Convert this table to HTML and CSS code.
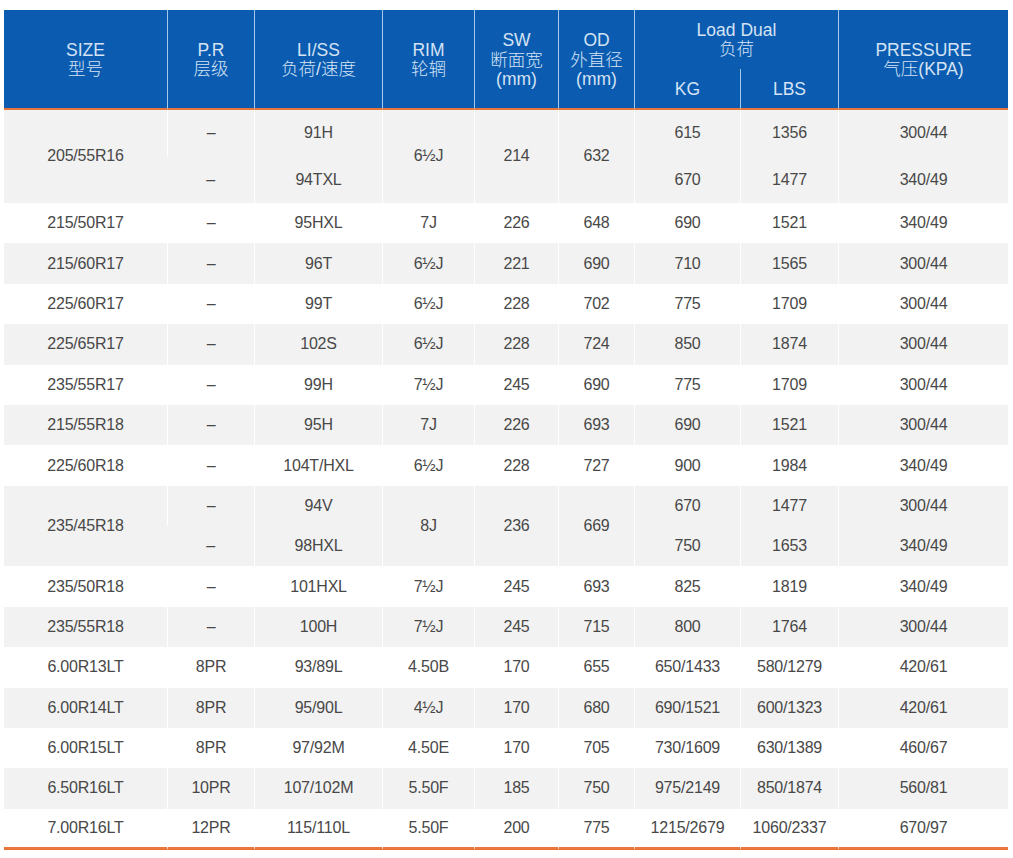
FILE: index.html
```html
<!DOCTYPE html>
<html lang="zh">
<head>
<meta charset="utf-8">
<title>Tyre specifications</title>
<link rel="stylesheet" href="styles.css">
</head>
<body>
<table class="spec">
  <colgroup>
    <col class="c-size"><col class="c-pr"><col class="c-li"><col class="c-rim"><col class="c-sw"><col class="c-od"><col class="c-kg"><col class="c-lbs"><col class="c-pre">
  </colgroup>
  <thead>
    <tr class="h1">
      <th rowspan="2" class="bot span">SIZE<br>型号</th>
      <th rowspan="2" class="bot span">P.R<br>层级</th>
      <th rowspan="2" class="bot span">LI/SS<br>负荷/速度</th>
      <th rowspan="2" class="bot span">RIM<br>轮辋</th>
      <th rowspan="2" class="bot span">SW<br>断面宽<br>(mm)</th>
      <th rowspan="2" class="bot span">OD<br>外直径<br>(mm)</th>
      <th colspan="2" class="group">Load Dual<br>负荷</th>
      <th rowspan="2" class="bot span">PRESSURE<br>气压(KPA)</th>
    </tr>
    <tr class="h2">
      <th class="bot sub">KG</th>
      <th class="bot sub">LBS</th>
    </tr>
  </thead>
  <tbody>
    <tr class="g tall">
      <td rowspan="2">205/55R16</td><td>–</td><td>91H</td><td rowspan="2">6½J</td><td rowspan="2">214</td><td rowspan="2">632</td><td>615</td><td>1356</td><td>300/44</td>
    </tr>
    <tr class="g tall">
      <td>–</td><td>94TXL</td><td>670</td><td>1477</td><td>340/49</td>
    </tr>
    <tr><td>215/50R17</td><td>–</td><td>95HXL</td><td>7J</td><td>226</td><td>648</td><td>690</td><td>1521</td><td>340/49</td></tr>
    <tr class="g"><td>215/60R17</td><td>–</td><td>96T</td><td>6½J</td><td>221</td><td>690</td><td>710</td><td>1565</td><td>300/44</td></tr>
    <tr><td>225/60R17</td><td>–</td><td>99T</td><td>6½J</td><td>228</td><td>702</td><td>775</td><td>1709</td><td>300/44</td></tr>
    <tr class="g"><td>225/65R17</td><td>–</td><td>102S</td><td>6½J</td><td>228</td><td>724</td><td>850</td><td>1874</td><td>300/44</td></tr>
    <tr><td>235/55R17</td><td>–</td><td>99H</td><td>7½J</td><td>245</td><td>690</td><td>775</td><td>1709</td><td>300/44</td></tr>
    <tr class="g"><td>215/55R18</td><td>–</td><td>95H</td><td>7J</td><td>226</td><td>693</td><td>690</td><td>1521</td><td>300/44</td></tr>
    <tr><td>225/60R18</td><td>–</td><td>104T/HXL</td><td>6½J</td><td>228</td><td>727</td><td>900</td><td>1984</td><td>340/49</td></tr>
    <tr class="g half">
      <td rowspan="2">235/45R18</td><td>–</td><td>94V</td><td rowspan="2">8J</td><td rowspan="2">236</td><td rowspan="2">669</td><td>670</td><td>1477</td><td>300/44</td>
    </tr>
    <tr class="g half">
      <td>–</td><td>98HXL</td><td>750</td><td>1653</td><td>340/49</td>
    </tr>
    <tr><td>235/50R18</td><td>–</td><td>101HXL</td><td>7½J</td><td>245</td><td>693</td><td>825</td><td>1819</td><td>340/49</td></tr>
    <tr class="g"><td>235/55R18</td><td>–</td><td>100H</td><td>7½J</td><td>245</td><td>715</td><td>800</td><td>1764</td><td>300/44</td></tr>
    <tr><td>6.00R13LT</td><td>8PR</td><td>93/89L</td><td>4.50B</td><td>170</td><td>655</td><td>650/1433</td><td>580/1279</td><td>420/61</td></tr>
    <tr class="g"><td>6.00R14LT</td><td>8PR</td><td>95/90L</td><td>4½J</td><td>170</td><td>680</td><td>690/1521</td><td>600/1323</td><td>420/61</td></tr>
    <tr><td>6.00R15LT</td><td>8PR</td><td>97/92M</td><td>4.50E</td><td>170</td><td>705</td><td>730/1609</td><td>630/1389</td><td>460/67</td></tr>
    <tr class="g"><td>6.50R16LT</td><td>10PR</td><td>107/102M</td><td>5.50F</td><td>185</td><td>750</td><td>975/2149</td><td>850/1874</td><td>560/81</td></tr>
    <tr class="last"><td>7.00R16LT</td><td>12PR</td><td>115/110L</td><td>5.50F</td><td>200</td><td>775</td><td>1215/2679</td><td>1060/2337</td><td>670/97</td></tr>
  </tbody>
</table>
</body>
</html>
```

FILE: styles.css
```css
html, body {
  margin: 0;
  padding: 0;
  background: #ffffff;
}

body {
  padding: 10px 5px 0 4px;
  font-family: "Liberation Sans", Arial, "Noto Sans CJK SC", sans-serif;
}

.spec {
  width: 1004px;
  table-layout: fixed;
  border-collapse: separate;
  border-spacing: 0;
}

.c-size { width: 163px; }
.c-pr { width: 87px; }
.c-li { width: 128px; }
.c-rim { width: 92px; }
.c-sw { width: 84px; }
.c-od { width: 76px; }
.c-kg { width: 106px; }
.c-lbs { width: 98px; }
.c-pre { width: 170px; }

.spec th {
  background: #0b5cb1;
  color: #d5e3f4;
  font-weight: 300;
  font-size: 17.5px;
  line-height: 19.5px;
  padding: 0;
  text-align: center;
  vertical-align: middle;
  border-left: 1px solid rgba(220, 235, 255, 0.75);
}

.spec thead tr.h1 th:first-child {
  border-left: none;
}

.spec th.bot {
  border-bottom: 2.5px solid #e8763c;
}

.spec th.span {
  padding-top: 3px;
}

.spec tr.h1 {
  height: 59px;
}

.spec tr.h2 {
  height: 40.5px;
}

.spec th.group {
  padding-top: 1px;
}

.spec th.sub {
  padding-top: 3px;
}

.spec td {
  padding: 0;
  text-align: center;
  vertical-align: middle;
  font-size: 16px;
  color: #484848;
  letter-spacing: -0.2px;
  border-left: 1px solid #ffffff;
  background: #ffffff;
}

.spec tr td:first-child {
  border-left: none;
}

.spec tr.g td {
  background: #f2f2f2;
}

.spec tbody tr {
  height: 40.4px;
}

.spec tbody tr.tall {
  height: 46.75px;
}

.spec tbody tr.half {
  height: 40.3px;
}

.spec tbody tr.last {
  height: 41.5px;
}

.spec tr.last td {
  border-bottom: 3px solid #e8763c;
}
```
